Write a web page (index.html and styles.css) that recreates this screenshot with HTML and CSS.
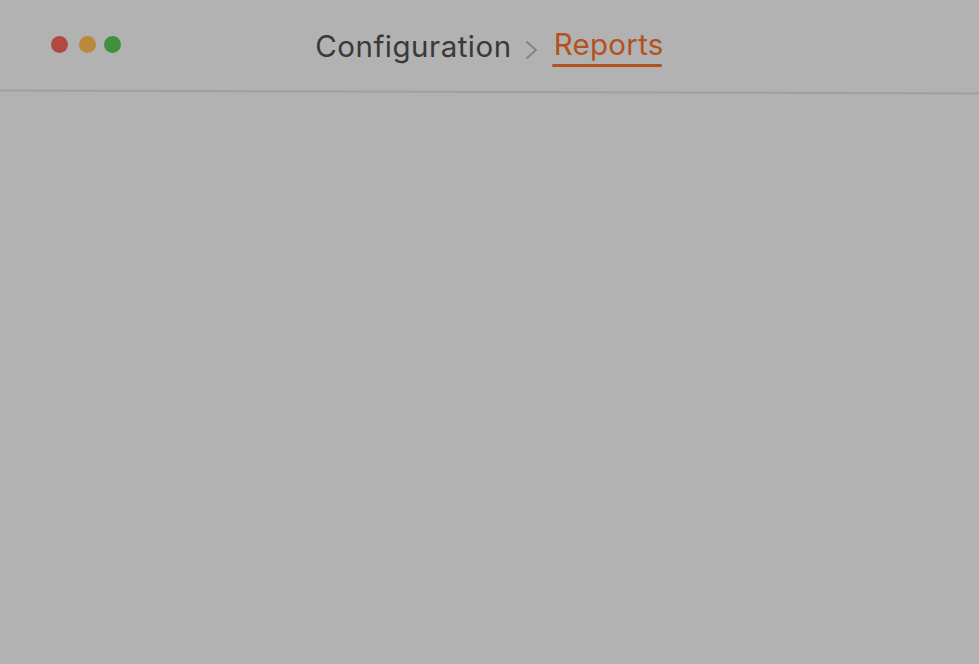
FILE: index.html
```html
<!DOCTYPE html>
<html>
<head>
<meta charset="utf-8">
<link rel="stylesheet" href="styles.css">
</head>
<body>
<div class="window">
  <header class="titlebar">
    <div class="lights">
      <span class="light red"></span>
      <span class="light yellow"></span>
      <span class="light green"></span>
    </div>
    <nav class="crumbs">
      <span class="crumb">Configuration</span>
      <svg class="chev" width="13" height="20" viewBox="0 0 13 20"><path d="M1.5 1.5 L11 10 L1.5 18.5" fill="none" stroke="#808080" stroke-width="1.7"/></svg>
      <span class="crumb active">Reports</span>
    </nav>
    <div></div>
  </header>
  <div class="divider"></div>
  <main class="content"></main>
</div>
</body>
</html>
```
FILE: styles.css
```css
html, body {
  margin: 0;
  padding: 0;
  background: #b2b2b2;
  height: 100%;
}
.window {
  height: 100%;
  font-family: Inter, "Noto Sans", sans-serif;
}
.titlebar {
  display: grid;
  grid-template-columns: 1fr auto 1fr;
  align-items: start;
  height: 90px;
}
.lights {
  display: flex;
  gap: 8px;
  align-items: center;
  margin: 36px 0 0 51px;
}
.light {
  width: 17px;
  height: 17px;
  border-radius: 50%;
  display: block;
}
.red { background: #ae4a42; }
.yellow { background: #b88a3a; margin-left: 3px; }
.green { background: #3f903f; }
.crumbs {
  display: flex;
  align-items: flex-start;
  padding-top: 28px;
  font-size: 29.5px;
  line-height: 36px;
  letter-spacing: 0.3px;
}
.crumb {
  color: #393939;
  letter-spacing: 0.5px;
}
.chev {
  margin: 12px 16px 0 13px;
  display: block;
}
.crumb.active {
  color: #b3511f;
  position: relative;
  margin-top: -2.5px;
  letter-spacing: 0.3px;
}
.crumb.active::after {
  content: "";
  position: absolute;
  left: -2px;
  right: 2px;
  bottom: -5px;
  height: 2.5px;
  border-radius: 2px;
  background: #b3511f;
}
.divider {
  height: 1.5px;
  background: #a0a0a0;
  transform: rotate(0.17deg);
  margin-top: 1px;
}
.content {
  flex: 1;
}
```
